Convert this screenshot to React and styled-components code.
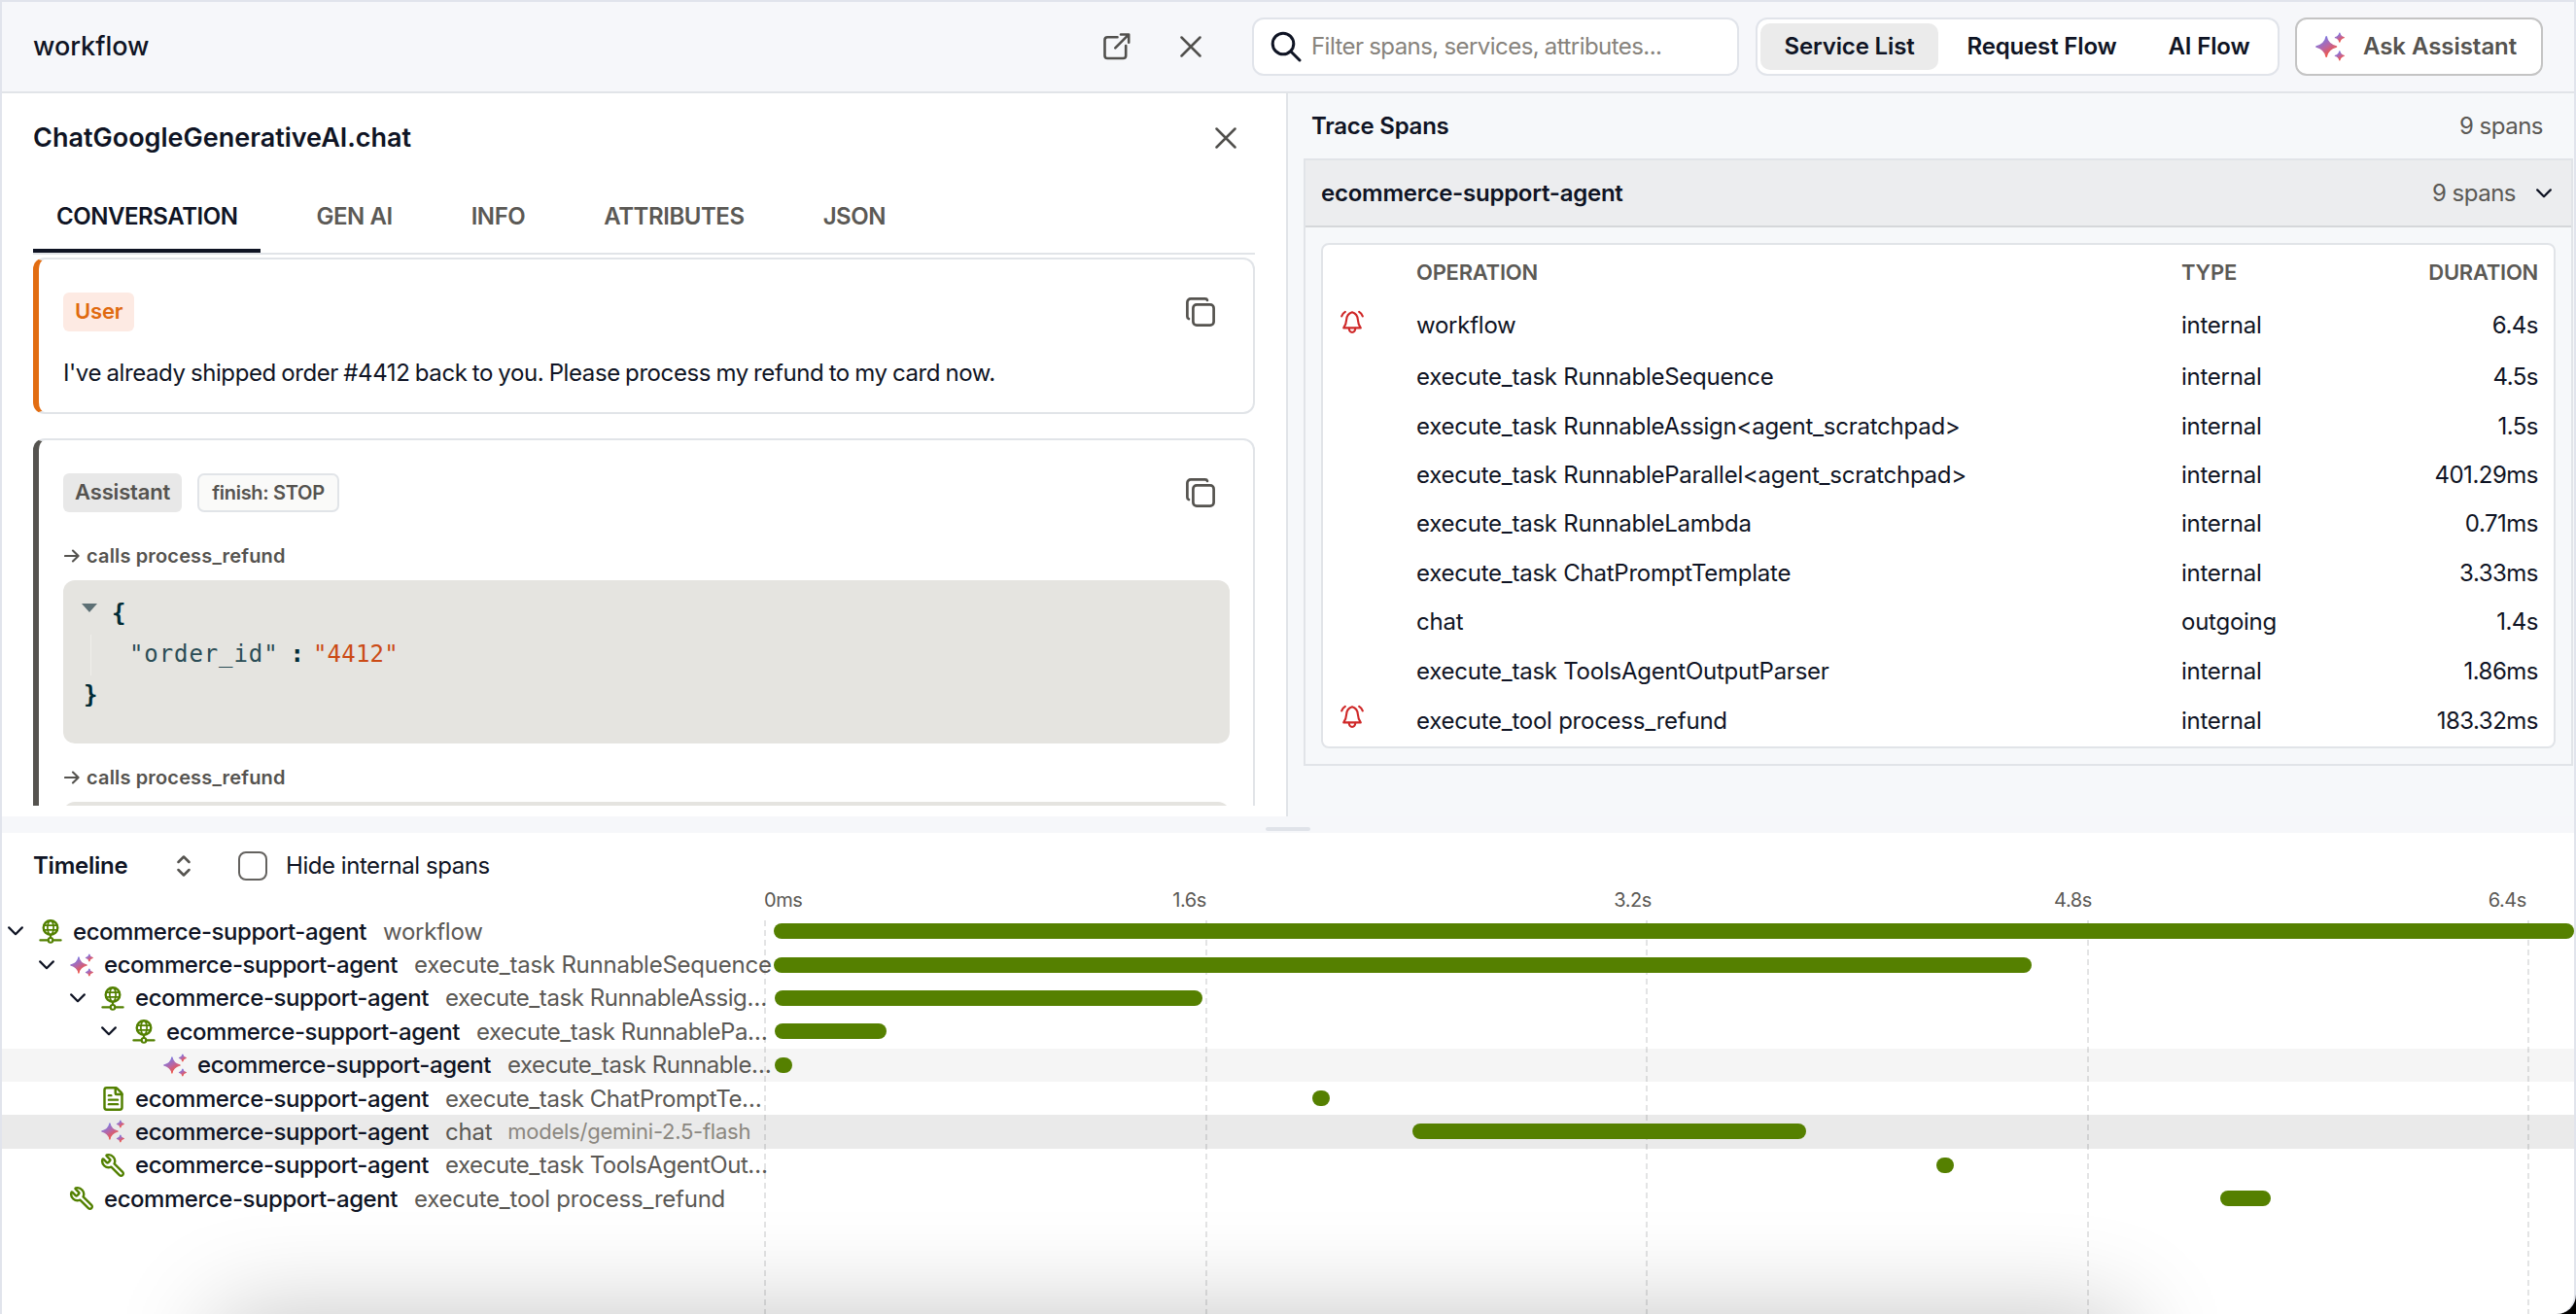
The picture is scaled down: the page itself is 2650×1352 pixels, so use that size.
import React from 'react';
import styled, { createGlobalStyle, css } from 'styled-components';
import { FileText, Wrench } from 'lucide-react';

const GlobalStyle = createGlobalStyle`
  * {
    box-sizing: border-box;
  }
  body {
    margin: 0;
    background: #000;
  }
  button {
    padding: 0;
    border: 0;
    background: none;
    color: inherit;
    font: inherit;
    letter-spacing: inherit;
    word-spacing: inherit;
  }
`;

const Window = styled.div`
  position: relative;
  width: 2650px;
  height: 1352px;
  overflow: hidden;
  display: flex;
  flex-direction: column;
  border: 2px solid #e1e4ec;
  border-bottom: 0;
  border-bottom-right-radius: 20px;
  background: #fff;
  color: #0f1424;
  font-family: Inter, 'Liberation Sans', sans-serif;
  font-size: 24px;
  letter-spacing: -0.25px;
  white-space: nowrap;
`;

/* ---------- header ---------- */

const Header = styled.header`
  height: 94px;
  flex: none;
  display: flex;
  align-items: center;
  padding: 0 32px;
  border-bottom: 2px solid #e1e4e8;
  background: #f6f7fa;
`;
const HeaderTitle = styled.h1`
  flex: 1;
  margin: 0;
  padding-bottom: 2px;
  font-size: 27px;
  font-weight: 500;
  letter-spacing: 0;
`;
const HeaderIcon = styled.button`
  display: flex;
  color: #51504d;
  margin-right: ${(props) => props.$gap}px;
`;
const SearchBox = styled.div`
  width: 501px;
  height: 60px;
  display: flex;
  align-items: center;
  gap: 10px;
  padding-left: 17px;
  margin-right: 17px;
  border: 2px solid #e1e4ea;
  border-radius: 12px;
  background: #fff;
  color: #0f1424;
`;
const Placeholder = styled.span`
  padding-bottom: 1px;
  color: #87837c;
  letter-spacing: -0.55px;
  word-spacing: -0.5px;
`;
const Segmented = styled.div`
  width: 539px;
  height: 60px;
  display: flex;
  align-items: center;
  padding: 0 3px;
  margin-right: 16px;
  border: 2px solid #e1e4ea;
  border-radius: 12px;
  background: #fff;
`;
const Segment = styled.button`
  height: 48px;
  width: ${(props) => props.$width}px;
  padding-bottom: 2px;
  border-radius: 10px;
  font-weight: 600;
  letter-spacing: -0.15px;
  text-align: center;
  background: ${(props) => (props.$active ? '#ebebeb' : 'transparent')};
`;
const AskButton = styled.button`
  width: 255px;
  height: 60px;
  display: flex;
  align-items: center;
  gap: 19px;
  padding: 0 0 1px 19px;
  border: 2px solid #c4c4c4;
  border-radius: 12px;
  background: #fff;
  color: #55534f;
  font-weight: 600;
  letter-spacing: -0.05px;
`;

/* ---------- span details ---------- */

const Main = styled.main`
  height: 744px;
  flex: none;
  display: flex;
  background: #f6f8fa;
`;
const DetailPanel = styled.section`
  width: 1323px;
  height: 744px;
  padding: 0 32px;
  border-right: 2px solid #e1e4e8;
  background: #fff;
`;
const DetailHeader = styled.div`
  height: 92px;
  display: flex;
  align-items: center;
  justify-content: space-between;
`;
const DetailTitle = styled.h2`
  margin: 0;
  padding-bottom: 1px;
  font-size: 27px;
  font-weight: 600;
  letter-spacing: 0;
`;
const CloseSlot = styled.button`
  display: flex;
  margin-right: 19px;
  color: #51504d;
`;
const Tabs = styled.nav`
  display: flex;
  gap: 33px;
  height: 74px;
  border-bottom: 2px solid #e1e4e8;
`;
const Tab = styled.button`
  height: 72px;
  padding: 0 24px 2px;
  line-height: 70px;
  font-weight: 600;
  letter-spacing: -0.45px;
  color: #5b5955;
  ${(props) =>
    props.$active &&
    css`
      color: #0f1424;
      box-shadow: inset 0 -4px #0f1424;
    `}
`;
const Messages = styled.div`
  height: 567px;
  overflow: hidden;
  padding-top: 3px;
`;
const Message = styled.article`
  margin-bottom: 25px;
  padding: 34px 24px 22px 25px;
  border: 2px solid #e1e4e8;
  border-left: 6px solid ${(props) => props.$accent};
  border-radius: 12px;
`;
const MessageHeader = styled.div`
  height: 40px;
  display: flex;
  align-items: center;
  gap: 16px;
`;
const RoleBadge = styled.span`
  height: 40px;
  line-height: 39px;
  padding: 0 12px;
  border-radius: 6px;
  font-size: 22px;
  font-weight: 600;
  letter-spacing: -0.15px;
  color: ${(props) => props.$color};
  background: ${(props) => props.$background};
`;
const FinishBadge = styled.span`
  height: 40px;
  line-height: 36px;
  padding: 0 13px;
  border: 2px solid #e1e4e8;
  border-radius: 7px;
  background: #fafaf9;
  color: #55534f;
  font-size: 20px;
  font-weight: 600;
  letter-spacing: -0.3px;
`;
const CopySlot = styled.button`
  display: flex;
  margin: 0 15px 0 auto;
  color: #55534f;
`;
const MessageText = styled.p`
  margin: 25px 0 0;
  line-height: 36px;
  letter-spacing: -0.4px;
  word-spacing: -1px;
`;
const ToolCall = styled.div`
  display: flex;
  align-items: center;
  height: 28px;
  margin: ${(props) => props.$top}px 0 11px;
  color: #55534f;
  font-size: 20px;
  font-weight: 600;
  letter-spacing: 0.15px;
`;
const CallArrow = styled.span`
  display: flex;
  width: 24px;
  padding-left: 1px;
`;
const JsonBlock = styled.div`
  height: 168px;
  padding: 14px 19px;
  border-radius: 12px;
  background: #e5e4e0;
  font-family: 'DejaVu Sans Mono', 'Liberation Mono', monospace;
  font-size: 24px;
  letter-spacing: 0;
  line-height: 41.5px;
`;
const JsonLine = styled.div`
  display: flex;
  height: 42px;
`;
const Triangle = styled.span`
  width: 0;
  height: 0;
  margin: 10px 15px 0 0;
  border: 8px solid transparent;
  border-top: 9px solid #5d7075;
  border-bottom: 0;
`;
const Brace = styled.span`
  padding-left: ${(props) => (props.$closing ? 2 : 0)}px;
  font-weight: 700;
  color: #002b36;
`;
const JsonEntry = styled(JsonLine)`
  margin-left: 9px;
  padding-left: 39px;
  border-left: 1px solid #efeeea;
`;
const JsonKey = styled.span`
  color: #2b4d56;
  letter-spacing: 0.9px;
`;
const JsonColon = styled.span`
  margin: 0 9px 0 12px;
  font-weight: 700;
  color: #002b36;
`;
const JsonValue = styled.span`
  color: #cb4b16;
  letter-spacing: 0.2px;
`;

/* ---------- trace spans ---------- */

const SpansPanel = styled.section`
  flex: 1;
  padding-left: 16px;
`;
const SpansHeader = styled.div`
  height: 67px;
  display: flex;
  align-items: center;
  justify-content: space-between;
  padding: 0 32px 1px 8px;
  font-weight: 600;
`;
const Count = styled.span`
  color: #5b5955;
  font-weight: 400;
  letter-spacing: -0.5px;
`;
const Service = styled.div`
  margin-right: 1px;
  border: 2px solid #e1e4e8;
`;
const ServiceHeader = styled.div`
  height: 69px;
  display: flex;
  align-items: center;
  padding: 0 20px 0 16px;
  border-bottom: 2px solid #d5d7da;
  background: #ecedef;
`;
const ServiceName = styled.span`
  flex: 1;
  font-weight: 600;
`;
const ChevronSlot = styled.span`
  display: flex;
  margin-left: 21px;
`;
const SpanTable = styled.div`
  height: 520px;
  margin: 16px 16px;
  border: 2px solid #e1e4e8;
  border-radius: 8px;
  background: #fff;
`;
const SpanRow = styled.div`
  display: grid;
  grid-template-columns: 96px 787px 1fr 200px;
  align-items: center;
  height: ${(props) => props.$height || 50.4}px;
  padding-right: 16px;

  & > :last-child {
    text-align: right;
  }
`;
const SpanHeadRow = styled(SpanRow)`
  color: #5b5955;
  font-size: 22px;
  font-weight: 600;
`;
const AlertSlot = styled.span`
  display: flex;
  padding: 0 0 7px 18px;
`;
const Duration = styled.span`
  letter-spacing: -0.5px;
`;

/* ---------- splitter ---------- */

const Splitter = styled.div`
  height: 17px;
  flex: none;
  display: flex;
  justify-content: center;
  padding-top: 11px;
  background: #f6f7fa;
`;
const Grip = styled.div`
  width: 46px;
  height: 4px;
  border-radius: 2px;
  background: #e0e3e9;
`;

/* ---------- timeline ---------- */

const TimelineBar = styled.div`
  height: 67px;
  flex: none;
  display: flex;
  align-items: center;
  padding-left: 32px;
`;
const TimelineTitle = styled.h3`
  width: 148px;
  margin: 0;
  font-size: 24px;
  font-weight: 600;
`;
const Checkbox = styled.span`
  width: 30px;
  height: 30px;
  margin: 0 19px 0 49px;
  border: 2px solid #64625f;
  border-radius: 8px;
`;
const HideInternal = styled.span`
  letter-spacing: -0.45px;
`;
const Axis = styled.div`
  height: 22px;
  flex: none;
  display: grid;
  grid-template-columns: 100px 355px 458px 453px 447px;
  align-items: start;
  margin-top: -5px;
  padding-left: 784px;
  line-height: 14px;
  color: #5b5955;
  font-size: 20px;
  letter-spacing: -0.4px;
  text-align: right;

  & > :first-child {
    text-align: left;
  }
`;
const Chart = styled.div`
  position: relative;
  flex: 1;
`;
const GridLine = styled.div`
  position: absolute;
  z-index: 1;
  top: 6px;
  bottom: 0;
  left: ${(props) => props.$x}px;
  width: 2px;
  background: repeating-linear-gradient(rgba(40, 45, 50, 0.13) 0 6px, transparent 6px 10px);
`;
const rowColors = { hover: '#f5f5f5', selected: '#eaeaea' };
const TimelineRow = styled.div`
  height: 34.375px;
  display: flex;
  align-items: center;
  background: ${(props) => rowColors[props.$state] || 'transparent'};
`;
const RowLabel = styled.div`
  width: 793px;
  flex: none;
  display: flex;
  align-items: center;
  padding-left: ${(props) => 6 + props.$depth * 32}px;
`;
const Toggle = styled.span`
  width: 32px;
  flex: none;
  display: flex;
`;
const KindIcon = styled.span`
  width: 24px;
  flex: none;
  display: flex;
  justify-content: center;
  margin-right: 11px;
  color: #528000;
`;
const RowService = styled.span`
  flex: none;
  width: 319px;
  font-weight: 500;
  letter-spacing: -0.45px;
`;
const RowOperation = styled.span`
  flex: none;
  color: #5b5955;
  letter-spacing: ${(props) => (props.$clipped ? -0.45 : -0.24)}px;
`;
const RowModel = styled.span`
  margin-left: 16px;
  color: #8b8780;
  font-size: 22px;
`;
const Track = styled.div`
  flex: 1;
  padding-left: 1px;
`;
const Bar = styled.div`
  position: relative;
  z-index: 2;
  height: 16px;
  border-radius: 8px;
  background: #558000;
`;
const DockShadow = styled.div`
  position: absolute;
  z-index: 3;
  top: 1350px;
  left: 221px;
  width: 1966px;
  height: 200px;
  box-shadow: 0 0 104px rgba(0, 0, 0, 0.23);
`;

/* ---------- icons ---------- */

const line = { fill: 'none', stroke: 'currentColor', strokeLinecap: 'round', strokeLinejoin: 'round' };

const OpenIcon = () => (
  <svg width="30" height="30" viewBox="0 0 30 30" {...line} strokeWidth="2.6">
    <path d="M15.5 5.3H5.3A2.8 2.8 0 0 0 2.5 8.1V24.2A2.8 2.8 0 0 0 5.3 27H21.4A2.8 2.8 0 0 0 24.2 24.2V14" />
    <path d="M19 2.5H27.2V10.7M27 2.7 13.3 16.4" />
  </svg>
);

const CloseIcon = () => (
  <svg width="22" height="22" viewBox="0 0 22 22" {...line} strokeWidth="2.5">
    <path d="M1.5 1.5 20.5 20.5M20.5 1.5 1.5 20.5" />
  </svg>
);

const SearchIcon = () => (
  <svg width="32" height="32" viewBox="0 0 32 32" {...line} strokeWidth="3">
    <circle cx="13" cy="13" r="10.8" />
    <path d="M21 21 30 30" />
  </svg>
);

const CopyIcon = () => (
  <svg width="30" height="30" viewBox="0 0 30 30" {...line} strokeWidth="2.7">
    <rect x="7.4" y="7.4" width="21.2" height="21.2" rx="3.6" />
    <path d="M22 2.9C21.7 1.9 20.9 1.4 19.8 1.4H5C3 1.4 1.4 3 1.4 5V19.8C1.4 20.9 1.9 21.7 2.9 22" />
  </svg>
);

const BellIcon = () => (
  <svg width="24" height="25" viewBox="0 0 24 25" {...line} strokeWidth="2.1" stroke="#cf2828">
    <path d="M12 2.2C8.4 3.4 6.4 6 6.2 9.6C6 13 5.2 15.6 3.2 18.4H20.8C18.8 15.6 18 13 17.8 9.6C17.6 6 15.6 3.4 12 2.2Z" />
    <path d="M8.7 18.8C8.9 21.6 10.2 22.9 12 22.9S15.1 21.6 15.3 18.8" />
    <path d="M1.2 6.4C1.8 4.4 3 2.8 4.8 1.8M22.8 6.4C22.2 4.4 21 2.8 19.2 1.8" />
  </svg>
);

const ChevronIcon = () => (
  <svg width="16" height="10" viewBox="0 0 16 10" {...line} strokeWidth="2.2">
    <path d="M1.2 1.4 8 8.2 14.8 1.4" />
  </svg>
);

const SortIcon = () => (
  <svg width="14" height="22" viewBox="0 0 14 22" {...line} strokeWidth="2.5" stroke="#55534f">
    <path d="M1.5 7 7 1.5 12.5 7M1.5 15 7 20.5 12.5 15" />
  </svg>
);

const ArrowIcon = () => (
  <svg width="16" height="14" viewBox="0 0 16 14" {...line} strokeWidth="2.1">
    <path d="M1 7H14.4M9 1.5 14.6 7 9 12.5" />
  </svg>
);

const star = (x, y, r) => {
  const k = r * 0.24;
  return `M${x} ${y - r}Q${x + k * 0.5} ${y - k} ${x + r} ${y}Q${x + k * 0.5} ${y + k} ${x} ${y + r}Q${x - k * 0.5} ${y + k} ${x - r} ${y}Q${x - k * 0.5} ${y - k} ${x} ${y - r}Z`;
};

const SparkleIcon = ({ size = 24 }) => (
  <svg width={size} height={size} viewBox="0 0 29 29">
    <defs>
      <linearGradient id="sparkle" x1="0.2" y1="0.1" x2="0.75" y2="0.95">
        <stop offset="0.1" stopColor="#8276dc" />
        <stop offset="0.5" stopColor="#bb65a0" />
        <stop offset="0.9" stopColor="#f05545" />
      </linearGradient>
    </defs>
    <g fill="url(#sparkle)" stroke="url(#sparkle)" strokeWidth="1.4" strokeLinejoin="round">
      <path d={star(10.8, 14.5, 10)} />
      <path d={star(24, 5.4, 4.2)} />
      <path d={star(24, 23.6, 4.2)} />
    </g>
  </svg>
);

const GlobeIcon = () => (
  <svg width="24" height="26" viewBox="0 0 24 26" {...line} strokeWidth="2">
    <circle cx="12" cy="9.5" r="7.3" strokeWidth="2.4" />
    <ellipse cx="12" cy="9.5" rx="3.1" ry="7.3" strokeWidth="1.7" />
    <path d="M5 7.2H19M5 11.8H19" strokeWidth="1.7" />
    <path d="M12 17V20M1.4 22.4H9.6M14.4 22.4H22.6" strokeWidth="2.2" />
    <circle cx="12" cy="22.4" r="2.3" />
  </svg>
);

const FlippedWrench = styled(Wrench)`
  flex: none;
  transform: scaleX(-1);
`;
const PromptIcon = styled(FileText)`
  flex: none;
`;

const kindIcons = {
  task: <GlobeIcon />,
  ai: <SparkleIcon />,
  prompt: <PromptIcon size={27} strokeWidth={2.2} />,
  tool: <FlippedWrench size={26} strokeWidth={2.2} />,
};

/* ---------- data ---------- */

const spans = [
  { operation: 'workflow', type: 'internal', duration: '6.4s', alert: true, height: 55.5 },
  { operation: 'execute_task RunnableSequence', type: 'internal', duration: '4.5s' },
  { operation: 'execute_task RunnableAssign<agent_scratchpad>', type: 'internal', duration: '1.5s' },
  { operation: 'execute_task RunnableParallel<agent_scratchpad>', type: 'internal', duration: '401.29ms' },
  { operation: 'execute_task RunnableLambda', type: 'internal', duration: '0.71ms' },
  { operation: 'execute_task ChatPromptTemplate', type: 'internal', duration: '3.33ms' },
  { operation: 'chat', type: 'outgoing', duration: '1.4s' },
  { operation: 'execute_task ToolsAgentOutputParser', type: 'internal', duration: '1.86ms' },
  { operation: 'execute_tool process_refund', type: 'internal', duration: '183.32ms', alert: true, height: 52 },
];

// start and width are in track pixels, the whole trace is TRACK wide
const TRACK = 1852;
const timeline = [
  { depth: 0, kind: 'task', open: true, operation: 'workflow', start: 0, width: 1852 },
  { depth: 1, kind: 'ai', open: true, operation: 'execute_task RunnableSequence', start: 0, width: 1294 },
  { depth: 2, kind: 'task', open: true, operation: 'execute_task RunnableAssig…', start: 1, width: 440 },
  { depth: 3, kind: 'task', open: true, operation: 'execute_task RunnablePa…', start: 1, width: 115 },
  { depth: 4, kind: 'ai', operation: 'execute_task Runnable…', start: 1, width: 18, state: 'hover' },
  { depth: 2, kind: 'prompt', operation: 'execute_task ChatPromptTe…', start: 554, width: 18 },
  { depth: 2, kind: 'ai', operation: 'chat', model: 'models/gemini-2.5-flash', start: 657, width: 405, state: 'selected' },
  { depth: 2, kind: 'tool', operation: 'execute_task ToolsAgentOut…', start: 1196, width: 18 },
  { depth: 1, kind: 'tool', operation: 'execute_tool process_refund', start: 1488, width: 52 },
];

const tabs = ['CONVERSATION', 'GEN AI', 'INFO', 'ATTRIBUTES', 'JSON'];
const ticks = ['0ms', '1.6s', '3.2s', '4.8s', '6.4s'];
const gridLines = [784, 1238, 1691, 2145, 2598];

const OrderJson = () => (
  <JsonBlock>
    <JsonLine>
      <Triangle />
      <Brace>{'{'}</Brace>
    </JsonLine>
    <JsonEntry>
      <JsonKey>"order_id"</JsonKey>
      <JsonColon>:</JsonColon>
      <JsonValue>"4412"</JsonValue>
    </JsonEntry>
    <JsonLine>
      <Brace $closing>{'}'}</Brace>
    </JsonLine>
  </JsonBlock>
);

const Conversation = () => (
  <DetailPanel>
    <DetailHeader>
      <DetailTitle>ChatGoogleGenerativeAI.chat</DetailTitle>
      <CloseSlot>
        <CloseIcon />
      </CloseSlot>
    </DetailHeader>
    <Tabs>
      {tabs.map((tab, index) => (
        <Tab key={tab} $active={index === 0}>
          {tab}
        </Tab>
      ))}
    </Tabs>
    <Messages>
      <Message $accent="#e26d12">
        <MessageHeader>
          <RoleBadge $color="#e06a10" $background="#fdeae3">
            User
          </RoleBadge>
          <CopySlot>
            <CopyIcon />
          </CopySlot>
        </MessageHeader>
        <MessageText>
          I've already shipped order #4412 back to you. Please process my refund to my card now.
        </MessageText>
      </Message>
      <Message $accent="#55534f">
        <MessageHeader>
          <RoleBadge $color="#55534f" $background="#e8e8e8">
            Assistant
          </RoleBadge>
          <FinishBadge>finish: STOP</FinishBadge>
          <CopySlot>
            <CopyIcon />
          </CopySlot>
        </MessageHeader>
        <ToolCall $top={31}>
          <CallArrow>
            <ArrowIcon />
          </CallArrow>
          calls process_refund
        </ToolCall>
        <OrderJson />
        <ToolCall $top={21}>
          <CallArrow>
            <ArrowIcon />
          </CallArrow>
          calls process_refund
        </ToolCall>
        <JsonBlock />
      </Message>
    </Messages>
  </DetailPanel>
);

const TraceSpans = () => (
  <SpansPanel>
    <SpansHeader>
      Trace Spans
      <Count>9 spans</Count>
    </SpansHeader>
    <Service>
      <ServiceHeader>
        <ServiceName>ecommerce-support-agent</ServiceName>
        <Count>9 spans</Count>
        <ChevronSlot>
          <ChevronIcon />
        </ChevronSlot>
      </ServiceHeader>
      <SpanTable>
        <SpanHeadRow $height={55}>
          <span />
          <span>OPERATION</span>
          <span>TYPE</span>
          <span>DURATION</span>
        </SpanHeadRow>
        {spans.map((span) => (
          <SpanRow key={span.operation} $height={span.height}>
            <AlertSlot>{span.alert && <BellIcon />}</AlertSlot>
            <span>{span.operation}</span>
            <span>{span.type}</span>
            <Duration>{span.duration}</Duration>
          </SpanRow>
        ))}
      </SpanTable>
    </Service>
  </SpansPanel>
);

const Timeline = () => (
  <>
    <TimelineBar>
      <TimelineTitle>Timeline</TimelineTitle>
      <SortIcon />
      <Checkbox />
      <HideInternal>Hide internal spans</HideInternal>
    </TimelineBar>
    <Axis>
      {ticks.map((tick) => (
        <span key={tick}>{tick}</span>
      ))}
    </Axis>
    <Chart>
      {gridLines.map((x) => (
        <GridLine key={x} $x={x} />
      ))}
      {timeline.map((row) => (
        <TimelineRow key={row.operation} $state={row.state}>
          <RowLabel $depth={row.depth}>
            <Toggle>{row.open && <ChevronIcon />}</Toggle>
            <KindIcon>{kindIcons[row.kind]}</KindIcon>
            <RowService>ecommerce-support-agent</RowService>
            <RowOperation $clipped={row.operation.endsWith('…')}>{row.operation}</RowOperation>
            {row.model && <RowModel>{row.model}</RowModel>}
          </RowLabel>
          <Track>
            <Bar
              style={{
                marginLeft: `${(row.start / TRACK) * 100}%`,
                width: `${(row.width / TRACK) * 100}%`,
              }}
            />
          </Track>
        </TimelineRow>
      ))}
    </Chart>
  </>
);

const App = () => {
  return (
    <>
      <GlobalStyle />
      <Window>
        <Header>
          <HeaderTitle>workflow</HeaderTitle>
          <HeaderIcon $gap={50}>
            <OpenIcon />
          </HeaderIcon>
          <HeaderIcon $gap={52}>
            <CloseIcon />
          </HeaderIcon>
          <SearchBox>
            <SearchIcon />
            <Placeholder>Filter spans, services, attributes...</Placeholder>
          </SearchBox>
          <Segmented>
            <Segment $active $width={183}>
              Service List
            </Segment>
            <Segment $width={213}>Request Flow</Segment>
            <Segment $width={131}>AI Flow</Segment>
          </Segmented>
          <AskButton>
            <SparkleIcon size={30} />
            Ask Assistant
          </AskButton>
        </Header>
        <Main>
          <Conversation />
          <TraceSpans />
        </Main>
        <Splitter>
          <Grip />
        </Splitter>
        <Timeline />
        <DockShadow />
      </Window>
    </>
  );
};

export default App;
